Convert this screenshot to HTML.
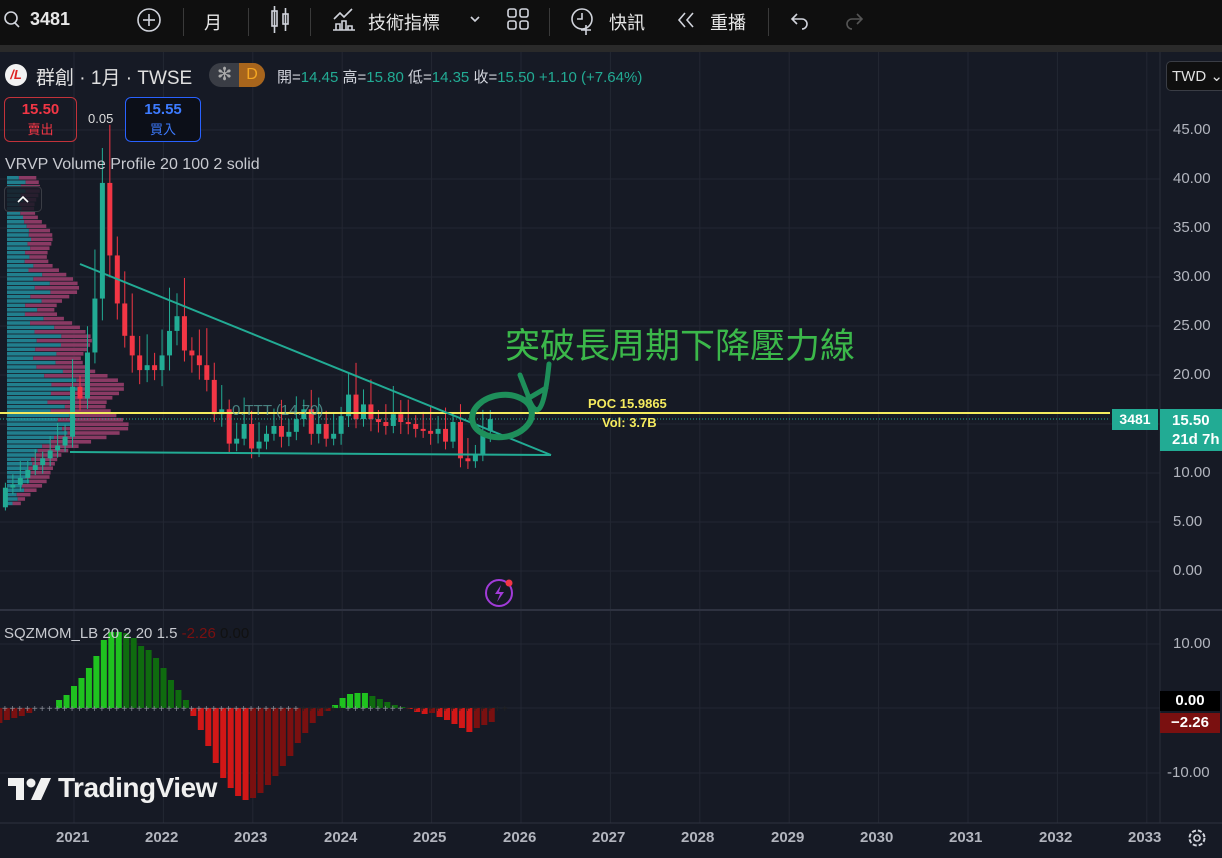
<!DOCTYPE html>
<html><head><meta charset="utf-8"><style>
*{margin:0;padding:0;box-sizing:border-box}
body{width:1222px;height:858px;overflow:hidden;background:#161a25;font-family:"Liberation Sans","Noto Sans CJK TC",sans-serif;color:#d1d4dc;position:relative}
.tb{position:absolute;left:0;top:0;width:1222px;height:45px;background:#0f0f0f}
.band{position:absolute;left:0;top:45px;width:1222px;height:7px;background:#2a2a2a}
.t{position:absolute;white-space:nowrap}
.sep{position:absolute;top:8px;width:1px;height:28px;background:#3a3a3a}
.ax{position:absolute;left:1173px;font-size:15px;color:#b2b5be}
.yr{position:absolute;top:829px;font-size:15px;color:#b2b5be;font-weight:bold}
</style></head><body>
<div class="tb"></div><div class="band"></div>
<svg class="t" style="left:0;top:0" width="1222" height="45">
<g fill="none" stroke="#d1d4dc" stroke-width="1.6">
<circle cx="11" cy="18" r="6"/><line x1="15" y1="23" x2="19" y2="27"/>
<circle cx="149" cy="20" r="11"/><line x1="149" y1="14" x2="149" y2="26"/><line x1="143" y1="20" x2="155" y2="20"/>
<rect x="272" y="11" width="5" height="15"/><line x1="274.5" y1="6" x2="274.5" y2="33"/><rect x="283" y="14" width="5" height="10"/><line x1="285.5" y1="8" x2="285.5" y2="31"/>
<path d="M333 30h22M336 30v-6h4v6M342 30v-9h4v9M348 30v-4h4v4M334 19l6-6 4 4 8-8"/>
<path d="M471 17l4 4 4-4"/>
<rect x="508" y="9" width="8" height="8" rx="2"/><rect x="520" y="9" width="8" height="8" rx="2"/><rect x="508" y="21" width="8" height="8" rx="2"/><rect x="520" y="21" width="8" height="8" rx="2"/>
<circle cx="582" cy="19" r="10"/><path d="M582 13v6h-5M586 25v10M581 30h10"/>
<path d="M685 13l-6 7 6 7M693 13l-6 7 6 7"/>
<path d="M797 14l-5 5 5 5M792 19h10a5 5 0 0 1 0 10"/>
</g>
<path d="M857 14l5 5-5 5M862 19h-10a5 5 0 0 0 0 10" fill="none" stroke="#555" stroke-width="1.6"/>
</svg>
<div class="t" style="left:30px;top:9px;font-size:18px;font-weight:bold;color:#e8e8e8">3481</div>
<div class="sep" style="left:183px"></div>
<div class="t" style="left:204px;top:9px;font-size:18px;color:#e8e8e8">月</div>
<div class="sep" style="left:248px"></div><div class="sep" style="left:310px"></div>
<div class="t" style="left:368px;top:9px;font-size:18px;color:#e8e8e8">技術指標</div>
<div class="sep" style="left:549px"></div>
<div class="t" style="left:609px;top:9px;font-size:18px;color:#e8e8e8">快訊</div>
<div class="t" style="left:710px;top:9px;font-size:18px;color:#e8e8e8">重播</div>
<div class="sep" style="left:768px"></div>

<svg id="ch" class="t" style="left:0;top:52px" width="1222" height="806"></svg>

<div class="t" style="left:5px;top:64px;width:22px;height:22px;border-radius:50%;background:#f2f2f2;color:#d22;font-size:13px;font-weight:bold;font-style:italic;text-align:center;line-height:22px">/L</div>
<div class="t" style="left:36px;top:63px;font-size:19px;color:#e0e0e0">群創 · 1月 · TWSE</div>
<div class="t" style="left:209px;top:63px;width:56px;height:24px;border-radius:12px;background:#3a3d45"></div>
<div class="t" style="left:239px;top:63px;width:26px;height:24px;border-radius:0 12px 12px 0;background:#a8651c;color:#f5a623;font-size:16px;text-align:center;line-height:24px">D</div>
<div class="t" style="left:217px;top:64px;font-size:18px;color:#aaa">✻</div>
<div class="t" style="left:277px;top:66px;font-size:15px;color:#d1d4dc">開=<span style="color:#22ab94">14.45</span> 高=<span style="color:#22ab94">15.80</span> 低=<span style="color:#22ab94">14.35</span> 收=<span style="color:#22ab94">15.50 +1.10 (+7.64%)</span></div>
<div class="t" style="left:4px;top:97px;width:73px;height:45px;border:1px solid #c2323a;border-radius:6px;text-align:center;color:#f23645;font-size:15px;font-weight:bold;line-height:20px;padding-top:2px">15.50<br><span style="font-size:13px;font-weight:normal">賣出</span></div>
<div class="t" style="left:88px;top:111px;font-size:13px;color:#ddd">0.05</div>
<div class="t" style="left:125px;top:97px;width:76px;height:45px;border:1px solid #2962ff;border-radius:6px;text-align:center;color:#3d7bff;font-size:15px;font-weight:bold;line-height:20px;padding-top:2px;background:#0c0f18">15.55<br><span style="font-size:13px;font-weight:normal">買入</span></div>
<div class="t" style="left:5px;top:156px;font-size:16px;color:#c8cad0">VRVP Volume Profile 20 100 2 solid</div>
<div class="t" style="left:505px;top:318px;font-size:35px;color:#3bb84a">突破長周期下降壓力線</div>
<div class="t" style="left:588px;top:396px;font-size:13px;font-weight:bold;color:#f5eb5e">POC 15.9865</div>
<div class="t" style="left:602px;top:415px;font-size:13px;font-weight:bold;color:#f5eb5e">Vol: 3.7B</div>
<div class="t" style="left:232px;top:402px;font-size:15px;color:#5aa5a0;opacity:.75">0.TTT (14.70)</div>
<div class="t" style="left:1166px;top:61px;width:60px;height:30px;border:1px solid #3a3d45;border-radius:5px;background:#0f0f0f;font-size:15px;color:#e0e0e0;padding:5px 0 0 5px">TWD ⌄</div>
<div class="ax" style="top:121px">45.00</div><div class="ax" style="top:170px">40.00</div><div class="ax" style="top:219px">35.00</div><div class="ax" style="top:268px">30.00</div><div class="ax" style="top:317px">25.00</div><div class="ax" style="top:366px">20.00</div><div class="ax" style="top:464px">10.00</div><div class="ax" style="top:513px">5.00</div><div class="ax" style="top:562px">0.00</div>
<div class="t" style="left:1112px;top:409px;width:46px;height:21px;background:#22ab94;color:#fff;font-size:14px;font-weight:bold;text-align:center;line-height:21px">3481</div>
<div class="t" style="left:1160px;top:409px;width:62px;height:42px;background:#22ab94;color:#fff;font-size:15px;font-weight:bold;padding:2px 0 0 12px;line-height:19px">15.50<br>21d 7h</div>
<div class="t" style="left:4px;top:625px;font-size:15px;color:#c8cad0">SQZMOM_LB 20 2 20 1.5 <span style="color:#7a1010">-2.26</span> <span style="color:#111">0.00</span></div>
<div class="ax" style="top:635px">10.00</div>
<div class="t" style="left:1160px;top:691px;width:60px;height:20px;background:#000;color:#fff;font-size:15px;font-weight:bold;text-align:center;line-height:20px">0.00</div>
<div class="t" style="left:1160px;top:713px;width:60px;height:20px;background:#7a1010;color:#fff;font-size:15px;font-weight:bold;text-align:center;line-height:20px">−2.26</div>
<div class="ax" style="top:764px;left:1167px">-10.00</div>
<div class="t" style="left:58px;top:772px;font-size:28px;font-weight:bold;color:#f0f0f0;letter-spacing:-0.5px">TradingView</div>
<svg class="t" style="left:8px;top:778px" width="44" height="24"><path d="M0 0h16v22h-8v-14h-8z" fill="#f0f0f0"/><circle cx="23" cy="5" r="4.5" fill="#f0f0f0"/><path d="M33 0h10l-10 22h-10z" fill="#f0f0f0"/></svg>
<div class="yr" style="left:56px">2021</div><div class="yr" style="left:145px">2022</div><div class="yr" style="left:234px">2023</div><div class="yr" style="left:324px">2024</div><div class="yr" style="left:413px">2025</div><div class="yr" style="left:503px">2026</div><div class="yr" style="left:592px">2027</div><div class="yr" style="left:681px">2028</div><div class="yr" style="left:771px">2029</div><div class="yr" style="left:860px">2030</div><div class="yr" style="left:949px">2031</div><div class="yr" style="left:1039px">2032</div><div class="yr" style="left:1128px">2033</div>
<svg class="t" style="left:1186px;top:827px" width="22" height="22"><circle cx="11" cy="11" r="7.5" fill="none" stroke="#d1d4dc" stroke-width="2" stroke-dasharray="4 2"/><circle cx="11" cy="11" r="3" fill="none" stroke="#d1d4dc" stroke-width="1.6"/></svg>
<script>
var s=document.getElementById('ch'),o=52,h='';
function L(x1,y1,x2,y2,c,w,d){h+='<line x1="'+x1+'" y1="'+(y1-o)+'" x2="'+x2+'" y2="'+(y2-o)+'" stroke="'+c+'" stroke-width="'+w+'"'+(d?' stroke-dasharray="'+d+'"':'')+'/>';}
function R(x,y,w,hh,c){h+='<rect x="'+x+'" y="'+(y-o)+'" width="'+w+'" height="'+hh+'" fill="'+c+'"/>';}
[130,179,228,277,326,375,424,473,522,571].forEach(function(y){L(0,y,1160,y,'#232733',1)});
[644,708,773].forEach(function(y){L(0,y,1160,y,'#232733',1)});
for(var k=0;k<13;k++){var gx=74+89.4*k;L(gx,52,gx,823,'#232733',1)}
L(0,610,1222,610,'#2e3240',2);L(0,823,1222,823,'#2e3240',1);L(1160,52,1160,823,'#2a2e39',1);
// volume profile
var pts=[[176,30],[200,34],[240,45],[260,55],[290,72],[310,62],[330,75],[350,100],[370,95],[385,115],[395,125],[410,135],[425,120],[440,90],[455,70],[470,45],[490,30],[505,15]];
function W(y){for(var q=0;q<pts.length-1;q++){if(y>=pts[q][0]&&y<=pts[q+1][0]){var f=(y-pts[q][0])/(pts[q+1][0]-pts[q][0]);return pts[q][1]+f*(pts[q+1][1]-pts[q][1]);}}return 10;}
for(var y=176;y<505;y+=4.4){var t=W(y)*(0.9+0.15*Math.sin(y*1.3));var b=t*(0.5+0.15*Math.sin(y*0.7));R(7,y,b,3.6,'#217f8e');R(7+b,y,t-b,3.6,'#8a3a64');}
R(4,186,38,26,'rgba(22,26,37,.85)');h+='<rect x="4.5" y="'+(186.5-o)+'" width="37" height="25" rx="4" fill="none" stroke="#3a3d45"/><path d="M18 '+(202-o)+'l5-5 5 5" fill="none" stroke="#fff" stroke-width="1.6"/>';
var cl=[8.5,8.8,9.5,10.3,10.8,11.5,12.3,12.8,13.7,18.8,17.6,22.3,27.8,39.6,32.2,27.3,24,22,20.5,21,20.5,22,24.5,26,22.5,22,21,19.5,16,16.5,13,13.5,15,12.5,13.2,14,14.8,13.7,14.2,15.5,16.5,14,15,13.5,14,15.8,18,15.5,17,15.5,15.2,14.8,16,15.2,15,14.5,14.3,14,14.5,13.2,15.2,11.5,11.2,11.8,14.3,15.5];
function Y(p){return 571-9.8*p}
var prev=6.5;
for(var i=0;i<cl.length;i++){var ii=i-10;var x=80+7.46*ii;var op=prev,c2=cl[i];var up=c2>=op;var col=up?'#22ab94':'#f23645';var hi=Math.max(op,c2)*(1.06+0.03*((i*7)%5)),lo=Math.min(op,c2)*(0.95-0.01*((i*3)%4));L(x,Y(hi),x,Y(lo),col,1);var t1=Y(Math.max(op,c2)),hh=Math.max(2,Y(Math.min(op,c2))-t1);R(x-2.5,t1,5,hh,col);prev=c2;}
L(0,413,1110,413,'#f5eb5e',2);L(0,419,1110,419,'#22ab94',1,'1 2');
L(80,264,551,455,'#22ab94',2);L(70,452,551,455,'#22ab94',2);
h+='<ellipse cx="502" cy="'+(416-o)+'" rx="30" ry="21" fill="none" stroke="#1e8f5a" stroke-width="6" transform="rotate(-8 502 '+(416-o)+')"/>';
h+='<path d="M549 '+(364-o)+'Q542 382 528 '+(397-o)+'M520 '+(375-o)+'L529 '+(398-o)+'L546 '+(388-o)+'" fill="none" stroke="#1e8f5a" stroke-width="5" stroke-linecap="round"/>';
h+='<circle cx="499" cy="'+(593-o)+'" r="13" fill="none" stroke="#a13bd8" stroke-width="2"/><path d="M501 '+(585-o)+'l-6 9h5l-3 8 7-10h-5z" fill="#a13bd8"/><circle cx="509" cy="'+(583-o)+'" r="3.5" fill="#f23645"/>';
var mv={'-10':-15,'-9':-12,'-8':-10,'-7':-8,'-6':-5};
var arr=[8,13,22,30,40,52,68,76,76,75,70,62,58,50,40,28,18,8,-8,-22,-38,-55,-70,-80,-88,-92,-90,-85,-77,-68,-58,-48,-35,-25,-15,-8,-3,3,10,14,15,15,12,9,6,3,1,-1,-4,-6,-5,-9,-12,-16,-20,-24,-20,-17,-14];
for(var k in mv){var x=74+7.46*(+k);R(x-3,708,6,-mv[k],'#7a1010');}
var pv=0;for(var j=0;j<arr.length;j++){var ii=j-2;var x=74+7.46*ii;var v=arr[j];var col=v>=0?(v>=pv?'#1fc21f':'#0f6b0f'):(v<=pv?'#d11717':'#7a1010');if(v>=0)R(x-3,708-v,6,v,col);else R(x-3,708,6,-v,col);pv=v;}
for(var x=2;x<505;x+=7.46){h+='<text x="'+x+'" y="'+(712-o)+'" font-size="10" fill="'+(x>300&&x<340||x>400?'#222':'#8a8e98')+'">+</text>';}
s.innerHTML=h;
</script>
</body></html>
